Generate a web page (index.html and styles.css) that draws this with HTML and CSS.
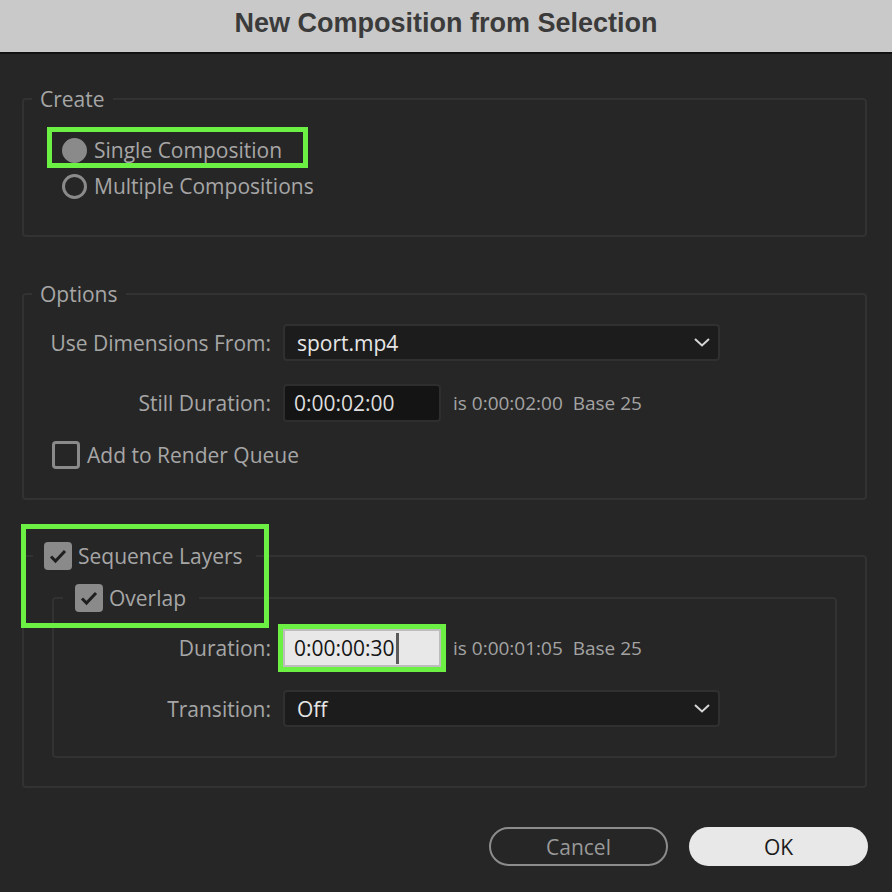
FILE: index.html
```html
<!DOCTYPE html>
<html lang="en">
<head>
  <meta charset="UTF-8" />
  <meta name="viewport" content="width=device-width, initial-scale=1.0"/>
  <title>New Composition from Selection</title>
  <link rel="stylesheet" href="styles.css">
</head>
<body>
  <div class="titlebar">New Composition from Selection</div>

  <div class="dialog">
    <fieldset class="group group-create">
      <legend>Create</legend>
      <label class="choice"><span class="radio checked"></span>Single Composition</label>
      <label class="choice"><span class="radio"></span>Multiple Compositions</label>
    </fieldset>

    <fieldset class="group group-options">
      <legend>Options</legend>
      <div class="row">
        <span class="row-label">Use Dimensions From:</span>
        <div class="select">
          <span>sport.mp4</span>
          <svg class="chevron" width="16" height="9" viewBox="0 0 16 9"><path d="M1 1l7 6.5L15 1" fill="none" stroke="#d6d6d6" stroke-width="2"/></svg>
        </div>
      </div>
      <div class="row row-still">
        <span class="row-label">Still Duration:</span>
        <div class="timecode">0:00:02:00</div>
        <span class="info">is 0:00:02:00  Base 25</span>
      </div>
      <label class="choice choice-check"><span class="checkbox"></span>Add to Render Queue</label>
    </fieldset>

    <fieldset class="group group-sequence">
      <legend class="check-legend">
        <span class="checkbox checked"><svg width="28" height="28" viewBox="0 0 28 28"><path d="M7 14.5l4.5 4.5L21 9" fill="none" stroke="#1e1e1e" stroke-width="3"/></svg></span>Sequence Layers
      </legend>

      <fieldset class="group group-overlap">
        <legend class="check-legend">
          <span class="checkbox checked"><svg width="28" height="28" viewBox="0 0 28 28"><path d="M7 14.5l4.5 4.5L21 9" fill="none" stroke="#1e1e1e" stroke-width="3"/></svg></span>Overlap
        </legend>
        <div class="row">
          <span class="row-label">Duration:</span>
          <div class="timecode active">0:00:00:30<span class="caret"></span></div>
          <span class="info">is 0:00:01:05  Base 25</span>
        </div>
        <div class="row">
          <span class="row-label">Transition:</span>
          <div class="select">
            <span>Off</span>
            <svg class="chevron" width="16" height="9" viewBox="0 0 16 9"><path d="M1 1l7 6.5L15 1" fill="none" stroke="#d6d6d6" stroke-width="2"/></svg>
          </div>
        </div>
      </fieldset>
    </fieldset>

    <div class="actions">
      <button class="btn btn-cancel">Cancel</button>
      <button class="btn btn-ok">OK</button>
    </div>
  </div>

  <!-- highlight frames drawn on top of the dialog -->
  <div class="mark mark-single"></div>
  <div class="mark mark-sequence"></div>
</body>
</html>
```

FILE: styles.css
```css
body {
  margin: 0;
  background: #262626;
  font-family: "Open Sans", "Noto Sans", sans-serif;
  font-size: 21px;
  color: #a6a6a6;
}
.titlebar {
  height: 52px;
  line-height: 46px;
  background: #c9c9c9;
  border-bottom: 2px solid #111;
  text-align: center;
  font-family: "Liberation Sans", Arial, sans-serif;
  font-weight: bold;
  font-size: 27px;
  color: #3b3b3b;
}
.dialog {
  padding-top: 33px;
}
.group {
  margin: 0 25px 0 22px;
  padding: 0;
  border: 2px solid #323232;
  border-radius: 4px;
  min-width: 0;
}
.group > legend {
  margin-left: 8px;
  padding: 0 8px;
  line-height: 24px;
  color: #a6a6a6;
}
.group-create {
  padding: 21px 0 31px 0;
}
.group-create .choice {
  margin-left: 38px;
}
.group-options {
  margin-top: 45px;
  padding: 18px 0 29px 0;
  display: flex;
  flex-direction: column;
}
.group-options .row-still {
  margin-top: 23px;
}
.group-options .choice-check {
  margin-top: 19px;
}
.group-sequence {
  margin-top: 42px;
  padding: 14px 0 28px 0;
}
.group-overlap {
  margin: 0 28px;
  padding: 17px 0 29px 0;
  display: flex;
  flex-direction: column;
  gap: 23px;
}
.group > .check-legend {
  display: flex;
  align-items: center;
  gap: 6px;
  margin-left: 9px;
  padding: 0 13px 0 11px;
  line-height: 28px;
}
.group-overlap > .check-legend {
  padding-left: 12px;
}

.choice {
  display: flex;
  align-items: center;
  gap: 7px;
  height: 36px;
}
.choice-check {
  height: 28px;
  margin-left: 28px;
}
.radio {
  width: 25px;
  height: 25px;
  box-sizing: border-box;
  border: 3px solid #8a8a8a;
  border-radius: 50%;
}
.radio.checked {
  background: #8a8a8a;
}
.checkbox {
  width: 28px;
  height: 28px;
  box-sizing: border-box;
  border: 3px solid #8a8a8a;
  border-radius: 4px;
}
.checkbox.checked {
  border: none;
  background: #8a8a8a;
}
.checkbox svg {
  display: block;
}

.row {
  display: flex;
  align-items: center;
  gap: 12px;
}
.row-label {
  width: 247px;
  text-align: right;
}
.group-overlap .row-label {
  width: 217px;
}
.select {
  width: 437px;
  height: 37px;
  box-sizing: border-box;
  display: flex;
  align-items: center;
  justify-content: space-between;
  padding: 0 8px 0 12px;
  background: #1c1c1c;
  border: 2px solid #303030;
  border-radius: 4px;
  color: #e6e6e6;
}
.timecode {
  width: 158px;
  height: 38px;
  box-sizing: border-box;
  display: flex;
  align-items: center;
  padding-left: 9px;
  background: #141414;
  border: 2px solid #2e2e2e;
  border-radius: 4px;
  color: #dedede;
}
.timecode.active {
  background: #e8e8e8;
  border-color: #bdbdbd;
  border-radius: 0;
  color: #151515;
  outline: 5px solid #6bf043;
}
.caret {
  width: 3px;
  height: 31px;
  margin-left: 1px;
  background: #5a5a5a;
}
.info {
  font-size: 19px;
  white-space: pre;
  color: #a3a3a3;
}

.actions {
  display: flex;
  justify-content: flex-end;
  gap: 21px;
  margin: 39px 24px 0 0;
}
.btn {
  width: 179px;
  height: 39px;
  border-radius: 20px;
  font-family: "Open Sans", "Noto Sans", sans-serif;
  font-size: 21px;
  box-sizing: border-box;
}
.btn-cancel {
  background: transparent;
  border: 2px solid #8c8c8c;
  color: #999;
}
.btn-ok {
  background: #e8e8e8;
  border: none;
  color: #1a1a1a;
}

.mark {
  position: absolute;
  box-sizing: border-box;
  border: 5px solid #6bf043;
}
.mark-single {
  left: 47px;
  top: 127px;
  width: 261px;
  height: 41px;
}
.mark-sequence {
  left: 21px;
  top: 524px;
  width: 248px;
  height: 104px;
}
```
